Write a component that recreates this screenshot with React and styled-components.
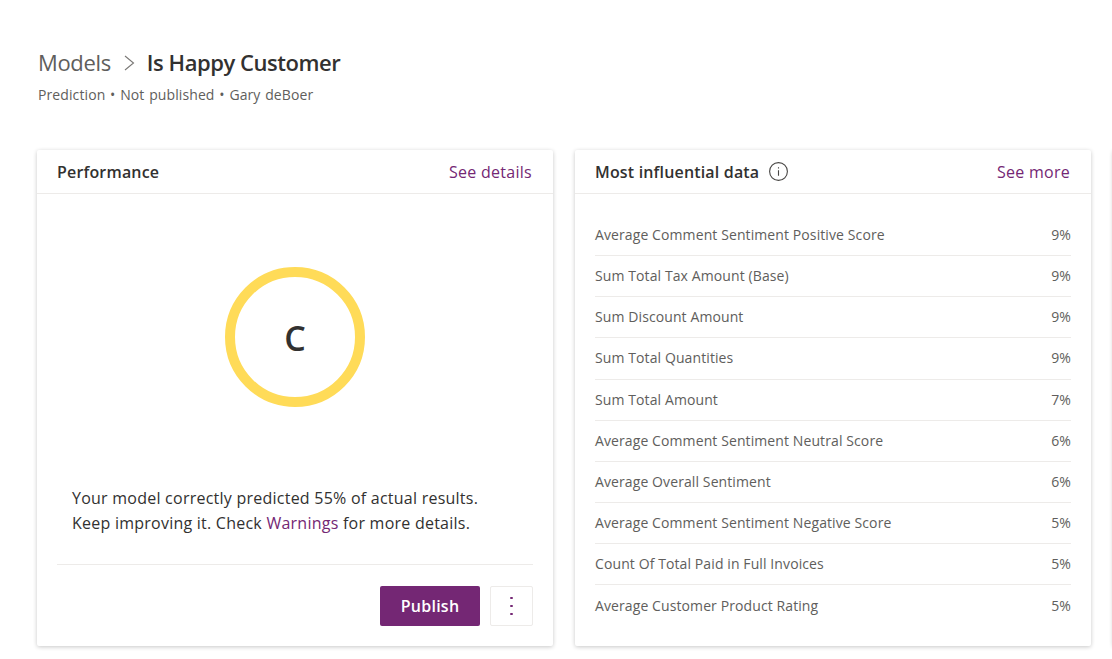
import React from "react";
import styled, { createGlobalStyle } from "styled-components";

const GlobalStyle = createGlobalStyle`
  html, body {
    margin: 0;
    padding: 0;
    background: #fff;
    overflow: hidden;
  }
  body {
    font-family: "Open Sans", "Liberation Sans", sans-serif;
    color: #323130;
  }
`;

const Page = styled.div`
  width: 1112px;
  height: 659px;
  overflow: hidden;
  box-sizing: border-box;
  padding: 46px 0 0 37px;
`;

const Header = styled.header`
  padding-left: 1px;
  height: 104px;
`;

const Breadcrumb = styled.div`
  display: flex;
  align-items: center;
  height: 32px;
  font-size: 22px;
  letter-spacing: -0.35px;
`;

const Crumb = styled.span`
  color: #605e5c;
`;

const Current = styled.span`
  color: #323130;
  font-weight: 600;
  letter-spacing: -0.45px;
`;

const Chevron = styled.svg`
  width: 12px;
  height: 16px;
  margin: 1px 12px 0 12px;
  fill: none;
  stroke: #7a7876;
  stroke-width: 1.1;
`;

const Meta = styled.div`
  font-size: 14px;
  line-height: 20px;
  margin-top: 7px;
  color: #605e5c;
  letter-spacing: 0.1px;
  word-spacing: 1px;
`;

const Cards = styled.div`
  display: flex;
  gap: 22px;
  width: 1700px;
`;

const Card = styled.section`
  width: 516px;
  height: 496px;
  flex: none;
  display: flex;
  flex-direction: column;
  background: #fff;
  border-radius: 2px;
  box-shadow: 0 1px 4px rgba(0, 0, 0, 0.22);
`;

const CardHeader = styled.div`
  height: 43px;
  flex: none;
  display: flex;
  align-items: center;
  justify-content: space-between;
  padding: 0 21px 0 20px;
  border-bottom: 1px solid #edebe9;
`;

const CardTitle = styled.h2`
  display: flex;
  align-items: center;
  gap: 10px;
  margin: 0;
  font-size: 16px;
  font-weight: 600;
  letter-spacing: 0.17px;
  color: #323130;
`;

const InfoIcon = styled.svg`
  width: 19px;
  height: 19px;
  fill: none;
  stroke: #484644;
  stroke-width: 1.1;
`;

const HeaderLink = styled.a`
  font-size: 16px;
  letter-spacing: 0.27px;
  color: #742774;
`;

const ScoreArea = styled.div`
  height: 287px;
  flex: none;
  display: flex;
  align-items: center;
  justify-content: center;
  padding-bottom: 1px;
  box-sizing: border-box;
`;

const ScoreRing = styled.div`
  width: 140px;
  height: 140px;
  box-sizing: border-box;
  border: 10px solid #ffdb58;
  border-radius: 50%;
  display: flex;
  align-items: center;
  justify-content: center;
  padding-top: 2px;
  font-size: 34px;
  font-weight: 600;
  color: #323130;
`;

const Summary = styled.p`
  margin: 0 20px;
  padding: 5px 15px 0;
  height: 84px;
  box-sizing: border-box;
  border-bottom: 1px solid #edebe9;
  font-size: 16px;
  line-height: 25px;
  letter-spacing: 0.24px;
  color: #323130;
`;

const InlineLink = styled.a`
  color: #742774;
`;

const Actions = styled.div`
  display: flex;
  justify-content: flex-end;
  gap: 10px;
  padding: 21px 20px 0;
`;

const PublishButton = styled.button`
  width: 100px;
  height: 40px;
  border: none;
  border-radius: 2px;
  background: #742774;
  color: #fff;
  font-family: inherit;
  font-size: 16px;
  font-weight: 600;
  letter-spacing: 0.27px;
`;

const MoreButton = styled.button`
  width: 43px;
  height: 40px;
  box-sizing: border-box;
  display: flex;
  flex-direction: column;
  align-items: center;
  justify-content: center;
  gap: 5.5px;
  padding: 0;
  background: #fff;
  border: 1px solid #edebe9;
  border-radius: 2px;
`;

const Dot = styled.span`
  width: 2.5px;
  height: 2.5px;
  border-radius: 50%;
  background: #742774;
`;

const DataList = styled.ul`
  list-style: none;
  margin: 0;
  padding: 20.8px 20px 0;
`;

const DataRow = styled.li`
  height: 41.2px;
  box-sizing: border-box;
  display: flex;
  align-items: center;
  justify-content: space-between;
  padding-bottom: 1px;
  font-size: 14px;
  letter-spacing: 0.1px;
  color: #605e5c;
  border-bottom: 1px solid ${(p) => (p.$last ? "transparent" : "#edebe9")};
`;

const influential = [
  ["Average Comment Sentiment Positive Score", "9%"],
  ["Sum Total Tax Amount (Base)", "9%"],
  ["Sum Discount Amount", "9%"],
  ["Sum Total Quantities", "9%"],
  ["Sum Total Amount", "7%"],
  ["Average Comment Sentiment Neutral Score", "6%"],
  ["Average Overall Sentiment", "6%"],
  ["Average Comment Sentiment Negative Score", "5%"],
  ["Count Of Total Paid in Full Invoices", "5%"],
  ["Average Customer Product Rating", "5%"],
];

export default function App() {
  return (
    <Page>
      <GlobalStyle />
      <Header>
        <Breadcrumb>
          <Crumb>Models</Crumb>
          <Chevron viewBox="0 0 12 16">
            <path d="M2 1l8.5 7L2 15" />
          </Chevron>
          <Current>Is Happy Customer</Current>
        </Breadcrumb>
        <Meta>Prediction • Not published • Gary deBoer</Meta>
      </Header>
      <Cards>
        <Card>
          <CardHeader>
            <CardTitle>Performance</CardTitle>
            <HeaderLink>See details</HeaderLink>
          </CardHeader>
          <ScoreArea>
            <ScoreRing>C</ScoreRing>
          </ScoreArea>
          <Summary>
            Your model correctly predicted 55% of actual results.
            <br />
            Keep improving it. Check <InlineLink>Warnings</InlineLink> for more details.
          </Summary>
          <Actions>
            <PublishButton>Publish</PublishButton>
            <MoreButton>
              <Dot />
              <Dot />
              <Dot />
            </MoreButton>
          </Actions>
        </Card>
        <Card>
          <CardHeader>
            <CardTitle>
              Most influential data
              <InfoIcon viewBox="0 0 19 19">
                <circle cx="9.5" cy="9.5" r="8.9" />
                <path d="M9.5 8.2v5.6M9.5 5.2v1.3" />
              </InfoIcon>
            </CardTitle>
            <HeaderLink>See more</HeaderLink>
          </CardHeader>
          <DataList>
            {influential.map(([name, value], i) => (
              <DataRow key={name} $last={i === influential.length - 1}>
                <span>{name}</span>
                <span>{value}</span>
              </DataRow>
            ))}
          </DataList>
        </Card>
        <Card />
      </Cards>
    </Page>
  );
}
